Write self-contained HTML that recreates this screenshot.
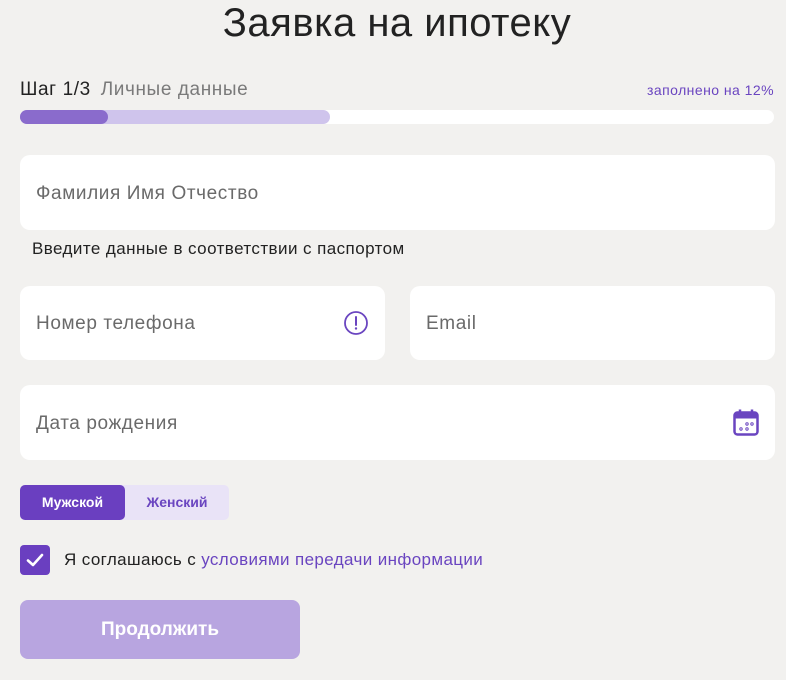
<!DOCTYPE html>
<html><head><meta charset="utf-8"><style>
*{box-sizing:border-box;margin:0;padding:0}
body{width:786px;height:680px;background:#f2f1ef;font-family:"Liberation Sans",sans-serif;position:relative;overflow:hidden;color:#222}
.a{position:absolute}
h1{position:absolute;left:0;width:794px;text-align:center;top:1px;font-size:40px;font-weight:normal;color:#222;letter-spacing:0.5px}
.f{position:absolute;background:#fff;border-radius:10px}
.ph{position:absolute;left:16px;top:50%;transform:translateY(-45%);font-size:19px;color:#6a6a6a;letter-spacing:0.6px}
</style></head><body>
<h1>Заявка на ипотеку</h1>
<div class="a" style="left:20px;top:79px;font-size:19px;color:#222;letter-spacing:0.6px">Шаг 1/3 <span style="color:#7a7a7a;margin-left:4px">Личные данные</span></div>
<div class="a" style="right:12px;top:82px;font-size:14px;color:#6a45c0;letter-spacing:0.45px">заполнено на 12%</div>
<div class="a" style="left:20px;top:110px;width:754px;height:14px;background:#fff;border-radius:7px"></div>
<div class="a" style="left:20px;top:110px;width:310px;height:14px;background:#cfc4ec;border-radius:7px"></div>
<div class="a" style="left:20px;top:110px;width:88px;height:14px;background:#8a6bcc;border-radius:7px"></div>
<div class="f" style="left:20px;top:155px;width:755px;height:75px"><span class="ph">Фамилия Имя Отчество</span></div>
<div class="a" style="left:32px;top:239px;font-size:17px;color:#222;letter-spacing:0.43px">Введите данные в соответствии с паспортом</div>
<div class="f" style="left:20px;top:286px;width:365px;height:74px"><span class="ph">Номер телефона</span>
<svg class="a" style="left:324px;top:25px" width="24" height="24" viewBox="0 0 24 24"><circle cx="12" cy="12" r="11" fill="none" stroke="#6a45c0" stroke-width="1.8"/><line x1="12" y1="6" x2="12" y2="14" stroke="#6a45c0" stroke-width="2" stroke-linecap="round"/><circle cx="12" cy="17.5" r="1.2" fill="#6a45c0"/></svg></div>
<div class="f" style="left:410px;top:286px;width:365px;height:74px"><span class="ph">Email</span></div>
<div class="f" style="left:20px;top:385px;width:755px;height:75px"><span class="ph">Дата рождения</span>
<svg class="a" style="left:713px;top:24px" width="26" height="27" viewBox="0 0 26 27"><rect x="1.5" y="3.5" width="23" height="22" rx="3" fill="none" stroke="#6a45c0" stroke-width="2.5"/><rect x="1.5" y="3.5" width="23" height="6" fill="#6a45c0"/><line x1="7" y1="0.5" x2="7" y2="5" stroke="#6a45c0" stroke-width="2.5"/><line x1="19" y1="0.5" x2="19" y2="5" stroke="#6a45c0" stroke-width="2.5"/><circle cx="14" cy="15" r="1.2" fill="none" stroke="#6a45c0"/><circle cx="19" cy="15" r="1.2" fill="none" stroke="#6a45c0"/><circle cx="8" cy="20" r="1.2" fill="none" stroke="#6a45c0"/><circle cx="14" cy="20" r="1.2" fill="none" stroke="#6a45c0"/></svg></div>
<div class="a" style="left:20px;top:485px;width:209px;height:35px;background:#e9e3f7;border-radius:5px"></div>
<div class="a" style="left:20px;top:485px;width:105px;height:35px;background:#6a3fc0;border-radius:5px;color:#fff;font-weight:bold;font-size:14px;text-align:center;line-height:35px">Мужской</div>
<div class="a" style="left:125px;top:485px;width:104px;height:35px;color:#6a45c0;font-weight:bold;font-size:14px;text-align:center;line-height:35px">Женский</div>
<div class="a" style="left:20px;top:545px;width:30px;height:30px;background:#6a3fc0;border-radius:4px">
<svg width="30" height="30" viewBox="0 0 30 30"><path d="M8 15.5l5 4.5 9-10" fill="none" stroke="#fff" stroke-width="2.6" stroke-linecap="round" stroke-linejoin="round"/></svg></div>
<div class="a" style="left:64px;top:550px;font-size:17px;color:#222;letter-spacing:0.38px">Я соглашаюсь с <span style="color:#6a45c0">условиями передачи информации</span></div>
<div class="a" style="left:20px;top:600px;width:280px;height:59px;background:#b8a5e0;border-radius:8px;color:#fff;font-weight:bold;font-size:19px;text-align:center;line-height:59px">Продолжить</div>
</body></html>
